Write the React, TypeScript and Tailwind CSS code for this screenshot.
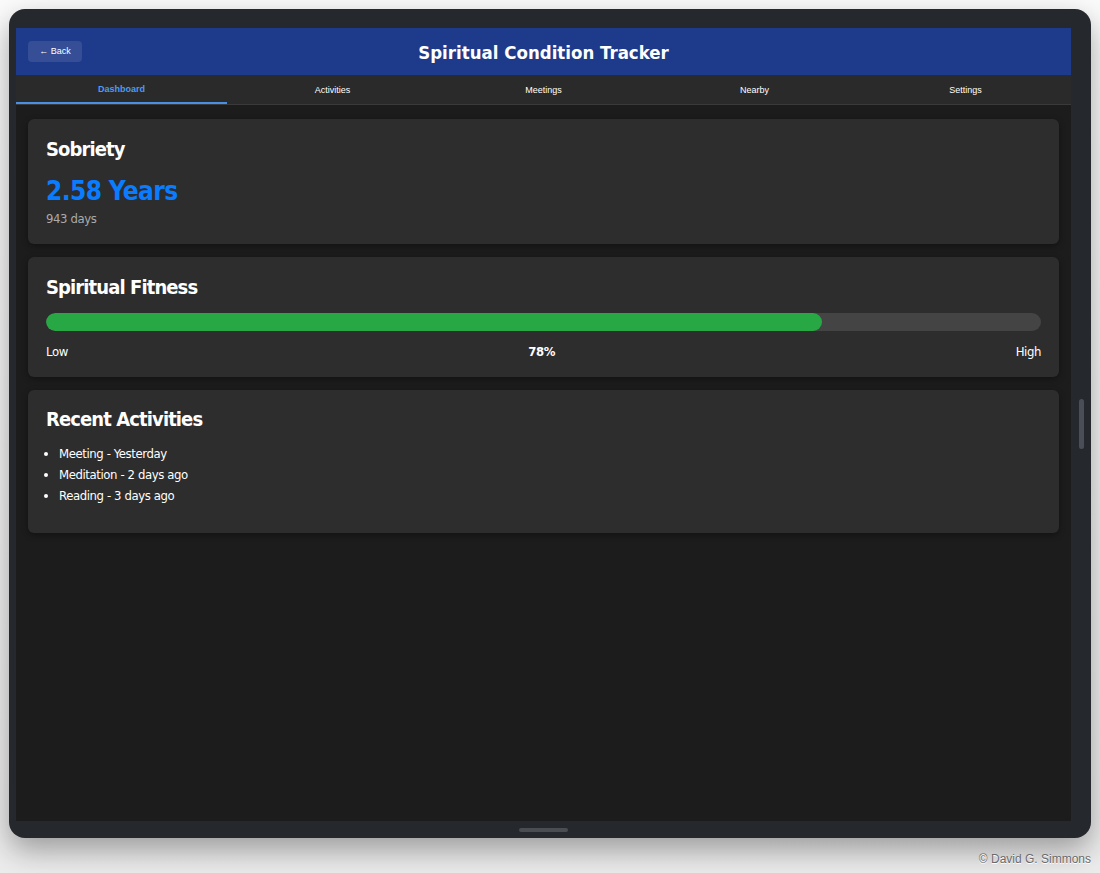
import React from "react";

const tabs = ["Dashboard", "Activities", "Meetings", "Nearby", "Settings"];

const activities = [
  "Meeting - Yesterday",
  "Meditation - 2 days ago",
  "Reading - 3 days ago",
];

const heading = "font-['DejaVu_Sans_Condensed','DejaVu_Sans',sans-serif]";

const Card = ({ children, className = "" }: { children: React.ReactNode; className?: string }) => (
  <div className={`bg-[#2d2d2d] rounded-[6px] shadow-[0_2px_6px_rgba(0,0,0,0.35)] px-[18px] ${className}`}>
    {children}
  </div>
);

export default function App() {
  const fitness = 78;

  return (
    <div className="w-[1100px] h-[873px] bg-gradient-to-b from-[#fbfbfb] to-[#ececec] overflow-hidden font-['Liberation_Sans',sans-serif]">
      <div className="pt-[9px] pl-[9px]">
        {/* Device frame */}
        <div className="w-[1082px] h-[829px] rounded-[16px] bg-[#25282d] shadow-[0_12px_30px_rgba(0,0,0,0.35)] flex flex-col pt-[19px] pl-[7px]">
          <div className="flex flex-1">
            {/* Screen */}
            <div className="w-[1055px] h-[793px] bg-[#1c1c1c] flex flex-col overflow-hidden">
              <header className="h-[47px] bg-[#1e3a8a] flex items-center relative">
                <button className="absolute left-[12px] top-[13px] w-[54px] h-[21px] rounded-[4px] bg-white/10 text-white text-[9px] flex items-center justify-center">
                  ← Back
                </button>
                <h1 className={`${heading} w-full text-center text-white font-bold text-[18.5px] leading-[22px] pt-[2px]`}>
                  Spiritual Condition Tracker
                </h1>
              </header>

              <nav className="h-[30px] bg-[#2a2a2a] border-b border-[#3a3a3a] flex">
                {tabs.map((tab, i) => (
                  <div
                    key={tab}
                    className={`flex-1 flex items-center justify-center pt-[2px] text-[9px] ${
                      i === 0
                        ? "text-[#4d9cf0] font-bold border-b-2 border-[#4a90e2]"
                        : "text-white"
                    }`}
                  >
                    {tab}
                  </div>
                ))}
              </nav>

              <main className={`${heading} flex flex-col gap-[13px] px-3 pt-[14px]`}>
                <Card className="pt-[18px] pb-[17px]">
                  <h2 className="text-white font-bold text-[20px] leading-[24px] tracking-[-0.9px]">Sobriety</h2>
                  <div className="mt-[15px] text-[#0a7cff] font-bold text-[26px] leading-[31px] tracking-[-0.6px]">2.58 Years</div>
                  <div className="mt-[4px] text-[#aaaaaa] text-[13px] leading-[16px] tracking-[-0.4px]">943 days</div>
                </Card>

                <Card className="pt-[18px] pb-[17px]">
                  <h2 className="text-white font-bold text-[20px] leading-[24px] tracking-[-0.9px]">Spiritual Fitness</h2>
                  <div className="mt-[14px] h-[18px] rounded-full bg-[#444444] overflow-hidden">
                    <div className="h-full rounded-full bg-[#28a745]" style={{ width: `${fitness}%` }} />
                  </div>
                  <div className="mt-[13px] flex justify-between text-white text-[13px] leading-[16px] tracking-[-0.4px]">
                    <span>Low</span>
                    <span className="font-bold">{fitness}%</span>
                    <span>High</span>
                  </div>
                </Card>

                <Card className="pt-[17px] pb-[27px]">
                  <h2 className="text-white font-bold text-[20px] leading-[24px] tracking-[-0.9px]">Recent Activities</h2>
                  <ul className="mt-[12px] list-disc pl-[13px] text-white text-[13px] leading-[21px] tracking-[-0.4px]">
                    {activities.map((a) => (
                      <li key={a}>{a}</li>
                    ))}
                  </ul>
                </Card>
              </main>
            </div>

            {/* Right edge with scroll indicator */}
            <div className="w-[20px] flex justify-center pt-[371px]">
              <div className="w-[5px] h-[50px] rounded-full bg-[#4a4f57]" />
            </div>
          </div>

          {/* Home indicator */}
          <div className="h-[17px] w-[1055px] flex justify-center items-center">
            <div className="w-[49px] h-[4px] rounded-full bg-[#4a4d52]" />
          </div>
        </div>
      </div>

      <div className="mt-[12px] pr-[9px] text-right text-[12px] text-[#6a6a6a] [text-shadow:0_1px_0_#ffffff]">
        © David G. Simmons
      </div>
    </div>
  );
}
